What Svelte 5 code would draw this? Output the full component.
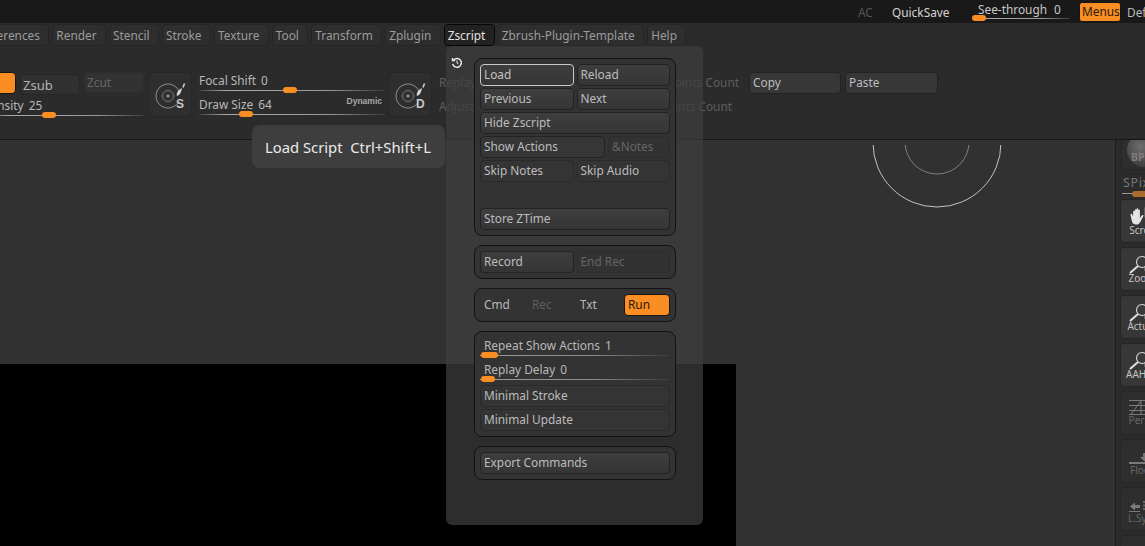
<script lang="ts">
	const menus = ['Preferences', 'Render', 'Stencil', 'Stroke', 'Texture', 'Tool', 'Transform', 'Zplugin', 'Zscript', 'Zbrush-Plugin-Template', 'Help'];
	const shelfTop = ['Scroll', 'Zoom', 'Actual', 'AAHalf'];
</script>

{#snippet slider(label: string, value: string, left: number, width = 14)}
	<div class="slider">
		<div class="slider-label"><span>{label}</span><span>{value}</span></div>
		<div class="track"></div>
		<div class="thumb" style="left: {left}px; width: {width}px"></div>
	</div>
{/snippet}

{#snippet brushIcon(letter: string)}
	<div class="brush-btn">
		<svg width="44" height="45" viewBox="0 0 44 45" fill="none">
			<path d="M30.400 30A12 12 0 1 1 31 19.200" stroke="#a8a8a8" stroke-width="0.800" />
			<circle cx="20" cy="24" r="5.500" stroke="#8c8c8c" stroke-width="0.800" />
			<path d="M18 24h4M20 22v4" stroke="#b8b8b8" stroke-width="0.800" />
			<path d="M29 24c-1-3 1-6 5-8-.5 4-2 7-5 8z" fill="#d4d4d4" />
			<path d="M36.500 11.500l-1.500 4" stroke="#d4d4d4" stroke-width="1.500" />
		</svg>
		<span class="brush-letter">{letter}</span>
	</div>
{/snippet}

<div class="app">
	<header class="topbar">
		<span class="top-dim">AC</span>
		<span class="top-save">QuickSave</span>
		<div class="see">
			{@render slider('See-through', '0', 0)}
		</div>
		<button class="btn on menus-btn">Menus</button>
		<span class="top-save def">Default</span>
	</header>

	<nav class="menubar">
		{#each menus as m}
			<span class="menu" class:active={m === 'Zscript'}>{m}</span>
		{/each}
	</nav>

	<section class="toolbar">
		<div class="col-z">
			<div class="z-row">
				<button class="btn on z-on"></button>
				<button class="btn zsub">Zsub</button>
				<button class="btn off zcut">Zcut</button>
			</div>
			<div class="intensity">
				{@render slider('Intensity', '25', 56)}
			</div>
		</div>
		{@render brushIcon('S')}
		<div class="col-draw">
			{@render slider('Focal Shift', '0', 84)}
			{@render slider('Draw Size', '64', 40)}
			<span class="dynamic">Dynamic</span>
		</div>
		{@render brushIcon('D')}
		<div class="col-replay">
			<div class="replay-row"><span>Replay</span><span>Points Count</span></div>
			<div class="replay-row short"><span>Adjust</span><span>Points Count</span></div>
		</div>
		<button class="btn copy">Copy</button>
		<button class="btn paste">Paste</button>
	</section>

	<main class="main">
		<div class="stage">
			<svg class="rings" width="140" height="70" viewBox="0 0 140 70" fill="none">
				<circle cx="70" cy="-2" r="64" stroke="#c4c4c4" stroke-width="1" />
				<circle cx="70" cy="-3" r="32" stroke="#808080" stroke-width="1" />
			</svg>
			<div class="viewport"></div>
		</div>
		<aside class="shelf">
			<div class="material"><div class="sphere"></div><span>BPR</span></div>
			<div class="spix">
				<span>SPix</span>
				<div class="spix-track"><i></i></div>
			</div>
			{#each shelfTop as name, i}
				<div class="tool">
					{#if i === 0}
						<svg class="tool-icon" width="24" height="22" viewBox="0 0 24 22">
							<rect x="17" y="4" width="8" height="9" fill="none" stroke="#888" stroke-width="1" />
							<path transform="translate(0 3) scale(0.85)" d="M6 11V5.500a1 1 0 0 1 2 0V10V3.500a1 1 0 0 1 2 0V10V2.500a1 1 0 0 1 2 0V10V4a1 1 0 0 1 2 0v9l2-3c1-1.300 3-.5 2 1l-3.500 6.500c-1 2-2.500 3-5 3-3 0-4.500-1.500-5-4L3 9.500c-.5-1.500 1.500-2 2-.8z" fill="#e4e4e4" />
						</svg>
					{:else}
						<svg class="tool-icon" width="24" height="22" viewBox="0 0 24 22" fill="none">
							<path d="M14 12.500h10M17 12.500v6.500h7" stroke="#999" stroke-width="1" />
							<circle cx="14" cy="10" r="5.500" fill="#3a3a3a" stroke="#d8d8d8" stroke-width="1.100" />
							<path d="M10 14L2 21" stroke="#e0e0e0" stroke-width="2" />
						</svg>
					{/if}
					<span>{name}</span>
				</div>
			{/each}
			<div class="tool dim persp">
				<svg class="tool-icon" width="24" height="22" viewBox="0 0 24 22" fill="none" stroke="#7a7a7a" stroke-width="1">
					<path d="M1 4.500h23M1 9.500h23M1 14.500h23M1 18.500h23M3 18.500L13 4.500M13 4.500v14" />
				</svg>
				<span>Persp</span>
			</div>
			<div class="tool dim">
				<svg class="tool-icon" width="24" height="22" viewBox="0 0 24 22" fill="none">
					<path d="M1 19h23" stroke="#7a7a7a" stroke-width="2" />
					<path d="M15 9h3v4h3l-4.500 4.500L12 13h3z" fill="#7a7a7a" />
				</svg>
				<span>Floor</span>
			</div>
			<div class="tool dim">
				<svg class="tool-icon" width="24" height="22" viewBox="0 0 24 22" fill="none">
					<path d="M2 14.500l5-4V13h5v3H7v2.500z" fill="#7a7a7a" />
					<path d="M16 9v9" stroke="#7a7a7a" stroke-width="1.500" stroke-dasharray="2 1.500" />
					<path d="M1 19.500h11" stroke="#7a7a7a" stroke-width="1" />
				</svg>
				<span>L.Sym</span>
			</div>
			<div class="tool dim"></div>
		</aside>
	</main>

	<div class="tooltip">Load Script&nbsp; Ctrl+Shift+L</div>

	<div class="panel">
		<svg class="panel-icon" width="12" height="12" viewBox="0 0 12 12" fill="none" stroke="#f0f0f0" stroke-width="1.400">
			<path d="M2.600 3A4.400 4.400 0 1 1 1.700 7" />
			<path d="M1.500 1v2.600h2.600" />
			<path d="M6 3.500V6l1.500 1" stroke-width="1" />
		</svg>
		<div class="group">
			<div class="row"><button class="btn half hot">Load</button><button class="btn half">Reload</button></div>
			<div class="row"><button class="btn half">Previous</button><button class="btn half">Next</button></div>
			<div class="row"><button class="btn wide">Hide Zscript</button></div>
			<div class="row"><button class="btn show">Show Actions</button><button class="btn off notes">&amp;Notes</button></div>
			<div class="row"><button class="btn half dark">Skip Notes</button><button class="btn half dark">Skip Audio</button></div>
			<div class="row spaced"><button class="btn wide">Store ZTime</button></div>
		</div>
		<div class="group">
			<div class="row"><button class="btn half">Record</button><button class="btn off half">End Rec</button></div>
		</div>
		<div class="group">
			<div class="row">
				<span class="flat">Cmd</span>
				<span class="flat muted">Rec</span>
				<span class="flat">Txt</span>
				<button class="btn on run">Run</button>
			</div>
		</div>
		<div class="group group-sliders">
			{@render slider('Repeat Show Actions', '1', 1, 17)}
			{@render slider('Replay Delay', '0', 1, 14)}
			<div class="row first"><button class="btn wide dark">Minimal Stroke</button></div>
			<div class="row"><button class="btn wide dark">Minimal Update</button></div>
		</div>
		<div class="group">
			<div class="row"><button class="btn wide">Export Commands</button></div>
		</div>
	</div>
</div>

<style>
	:global(body) {
		margin: 0;
		background: #2b2b2b;
	}
	.app {
		position: relative;
		width: 1145px;
		height: 546px;
		overflow: hidden;
		display: flex;
		flex-direction: column;
		background: #2b2b2b;
		font-family: 'Noto Sans', 'Open Sans', sans-serif;
		font-size: 11.850px;
		color: #b9b9b9;
	}
	button {
		font: inherit;
	}

	.btn {
		box-sizing: border-box;
		height: 22px;
		padding: 0 3px 2px;
		border: 1px solid #232323;
		border-radius: 4px;
		background: linear-gradient(#3e3e3e, #353535);
		color: #bdbdbd;
		text-align: left;
		line-height: 17px;
		white-space: nowrap;
	}
	.btn.off {
		background: #323232;
		border-color: #2d2d2d;
		color: #666;
	}
	.btn.on {
		background: #fb8e22;
		border-color: #151515;
		color: #2a1a08;
	}
	.btn.dark {
		background: #343434;
		border-color: #2a2a2a;
	}
	.btn.hot {
		border-color: #c8c8c8;
		color: #c4c4c4;
	}

	.topbar {
		height: 23px;
		flex: none;
		display: flex;
		align-items: center;
		background: #191919;
		padding-left: 858px;
		color: #c8c8c8;
	}
	.top-dim {
		flex: none;
		color: #555;
		width: 34px;
	}
	.top-save {
		flex: none;
		width: 58px;
		color: #d4d4d4;
		white-space: nowrap;
	}
	.see {
		width: 98px;
		margin-left: 22px;
		flex: none;
	}
	.see :global(.slider) {
		height: 21px;
		padding-top: 1px;
		box-sizing: border-box;
	}
	.see :global(.slider-label) {
		height: 16px;
		line-height: 15px;
		padding-left: 6px;
		gap: 7px;
	}
	.see :global(.thumb) {
		top: 14px;
	}
	.menus-btn {
		flex: none;
		margin-left: 9px;
		width: 42px;
		height: 20px;
		border-radius: 3px;
		padding: 0 2px;
		line-height: 17px;
	}
	.def {
		margin-left: 6px;
		color: #b9b9b9;
	}

	.menubar {
		height: 24px;
		flex: none;
		display: flex;
		gap: 3px;
		margin-left: -30px;
		align-items: flex-start;
		padding-top: 1px;
		box-sizing: border-box;
	}
	.menu {
		box-sizing: border-box;
		height: 22px;
		line-height: 20px;
		padding: 0 8.400px 0 3px;
		border: 1px solid #262626;
		border-radius: 4px;
		background: #2e2e2e;
		color: #9c9c9c;
		white-space: nowrap;
	}
	.menu.active {
		background: #222;
		border-color: #060606;
		color: #e2e2e2;
	}

	.toolbar {
		position: relative;
		box-sizing: border-box;
		height: 93px;
		flex: none;
		display: flex;
		align-items: flex-start;
		padding-top: 25px;
		border-bottom: 1px solid #161616;
	}
	.col-z {
		width: 158px;
		flex: none;
		margin-left: -14px;
	}
	.z-row {
		display: flex;
		gap: 4px;
		align-items: flex-start;
	}
	.z-on {
		width: 30px;
	}
	.zsub {
		width: 60px;
		margin-top: 2px;
		height: 21px;
		padding: 1px 3px 0 2px;
		background: #303030;
		color: #b4b4b4;
		border-color: #262626;
		font-size: 13px;
	}
	.zcut {
		width: 60px;
		height: 21px;
		padding: 0 3px 0 2px;
		background: #2d2d2d;
		border-color: #2a2a2a;
		color: #5a5a5a;
	}
	.intensity {
		margin-top: 3px;
	}
	.intensity :global(.slider-label) {
		margin-left: -11px;
		gap: 5px;
	}

	.brush-btn {
		position: relative;
		box-sizing: border-box;
		flex: none;
		width: 44px;
		height: 45px;
		margin-left: 4px;
		border: 1px solid #262626;
		border-radius: 4px;
		background: #2e2e2e;
	}
	.brush-btn svg {
		position: absolute;
		left: -1px;
		top: -1px;
	}
	.brush-letter {
		position: absolute;
		left: 27px;
		top: 24px;
		font-family: 'Liberation Sans', sans-serif;
		font-weight: 700;
		font-size: 12px;
		line-height: 14px;
		color: #c8c8c8;
	}

	.col-draw {
		position: relative;
		flex: none;
		width: 186px;
		margin-left: 7px;
		margin-top: 1px;
	}
	.dynamic {
		position: absolute;
		right: 3px;
		top: 23px;
		font-family: 'Liberation Sans', sans-serif;
		font-size: 8.500px;
		font-weight: 700;
		color: #a8a8a8;
	}
	.col-draw + .brush-btn {
		margin-left: 3px;
	}

	.col-replay {
		flex: none;
		width: 300px;
		margin-left: 7px;
		color: #5e5e5e;
	}
	.replay-row {
		display: flex;
		justify-content: space-between;
		height: 24px;
		line-height: 20px;
		white-space: nowrap;
	}
	.replay-row.short {
		width: 293px;
	}
	.copy {
		flex: none;
		width: 92px;
		margin-left: 10px;
		border-color: #222;
		background: #373737;
	}
	.paste {
		flex: none;
		width: 93px;
		margin-left: 4px;
		border-color: #222;
		background: #373737;
	}

	.slider {
		position: relative;
		height: 24px;
	}
	.slider-label {
		display: flex;
		gap: 5px;
		height: 17px;
		line-height: 14px;
		white-space: nowrap;
	}
	.track {
		height: 1px;
		background: linear-gradient(90deg, #444, #aaa 15%, #999 70%, #3a3a3a);
	}
	.thumb {
		position: absolute;
		top: 14px;
		height: 6px;
		border-radius: 3px;
		background: #fb8e22;
	}

	.main {
		flex: 1;
		display: flex;
		min-height: 0;
	}
	.stage {
		position: relative;
		flex: 1;
		background: #313131;
		border-right: 1px solid #1c1c1c;
		padding-top: 224px;
		box-sizing: border-box;
	}
	.rings {
		position: absolute;
		left: 867px;
		top: 5px;
	}
	.viewport {
		width: 736px;
		height: 182px;
		background: #000;
	}
	.shelf {
		flex: none;
		box-sizing: border-box;
		width: 29px;
		overflow: hidden;
		padding-left: 4px;
		background: #2b2b2b;
	}
	.material {
		position: relative;
		margin-top: -11px;
		margin-left: 1px;
		width: 50px;
		height: 41px;
		box-sizing: border-box;
		border: 1px solid #262626;
		border-radius: 4px;
		background: #2e2e2e;
	}
	.sphere {
		position: absolute;
		left: 5px;
		top: 3px;
		width: 34px;
		height: 34px;
		border-radius: 50%;
		background: radial-gradient(circle at 40% 40%, #6e6e6e, #3a3a3a 75%);
	}
	.material span {
		position: absolute;
		left: 9px;
		top: 20px;
		font-size: 10.500px;
		font-weight: 700;
		color: #7e7e7e;
	}
	.spix {
		height: 29px;
		margin-left: 3px;
		padding-top: 5px;
		box-sizing: border-box;
		color: #777;
		line-height: 15px;
	}
	.spix span {
		display: block;
		font-size: 12.500px;
		letter-spacing: 0.6px;
	}
	.spix-track {
		position: relative;
		height: 6px;
		margin-top: 1px;
	}
	.spix-track::before {
		content: '';
		position: absolute;
		left: -1px;
		right: 0;
		top: 2px;
		height: 1px;
		background: #999;
	}
	.spix-track i {
		position: absolute;
		left: 9px;
		width: 30px;
		height: 6px;
		border-radius: 3px;
		background: #a86c2c;
	}
	.tool {
		box-sizing: border-box;
		display: flex;
		flex-direction: column;
		align-items: center;
		width: 44px;
		height: 44px;
		margin-bottom: 4px;
		padding-top: 4px;
		border: 1px solid #252525;
		border-radius: 4px;
		background: #373737;
		font-size: 10px;
		line-height: 12px;
		color: #c4c4c4;
	}
	.tool-icon {
		flex: none;
		margin: 0 0 -2px -4px;
	}
	.tool.persp .tool-icon {
		margin-bottom: -4px;
	}
	.tool span {
		white-space: nowrap;
	}
	.tool.dim {
		background: #2e2e2e;
		border-color: #272727;
		color: #686868;
	}

	.tooltip {
		position: absolute;
		left: 252px;
		top: 125px;
		box-sizing: border-box;
		width: 193px;
		height: 43px;
		padding-left: 13px;
		border-radius: 8px;
		background: #3e3e3e;
		color: #ebebeb;
		font-size: 14.800px;
		line-height: 44px;
		white-space: nowrap;
	}

	.panel {
		position: absolute;
		left: 446px;
		top: 46px;
		box-sizing: border-box;
		width: 257px;
		height: 479px;
		padding: 12px 27px 0 28px;
		border-radius: 6px;
		background: rgba(61, 61, 61, 0.735);
		display: flex;
		flex-direction: column;
		gap: 9px;
	}
	.panel-icon {
		position: absolute;
		left: 5px;
		top: 11px;
	}
	.group {
		box-sizing: border-box;
		display: flex;
		flex-direction: column;
		gap: 2px;
		padding: 5px;
		border: 1px solid #131313;
		border-radius: 8px;
		background: #333;
	}
	.group-sliders {
		padding-top: 6px;
		gap: 0;
	}
	.group-sliders :global(.slider) {
		padding-left: 4px;
		width: 186px;
	}
	.group-sliders :global(.track) {
		margin-left: -4px;
		background: linear-gradient(90deg, #9a9a9a, #8a8a8a 60%, #3a3a3a);
	}
	.group-sliders .row.first {
		margin-top: -1px;
	}
	.group-sliders .row + .row {
		margin-top: 2px;
	}
	.row {
		display: flex;
		gap: 3px;
	}
	.row.spaced {
		margin-top: 24px;
	}
	.half {
		flex: 1 1 0;
		min-width: 0;
	}
	.wide {
		width: 100%;
	}
	.show {
		width: 125px;
		flex: none;
		background: #363636;
	}
	.notes {
		flex: 1;
		padding-left: 3px;
	}
	.flat {
		flex: none;
		width: 45px;
		height: 22px;
		line-height: 21px;
		padding-left: 4px;
		box-sizing: border-box;
	}
	.flat.muted {
		color: #5f5f5f;
	}
	.run {
		flex: none;
		width: 46px;
	}
</style>
